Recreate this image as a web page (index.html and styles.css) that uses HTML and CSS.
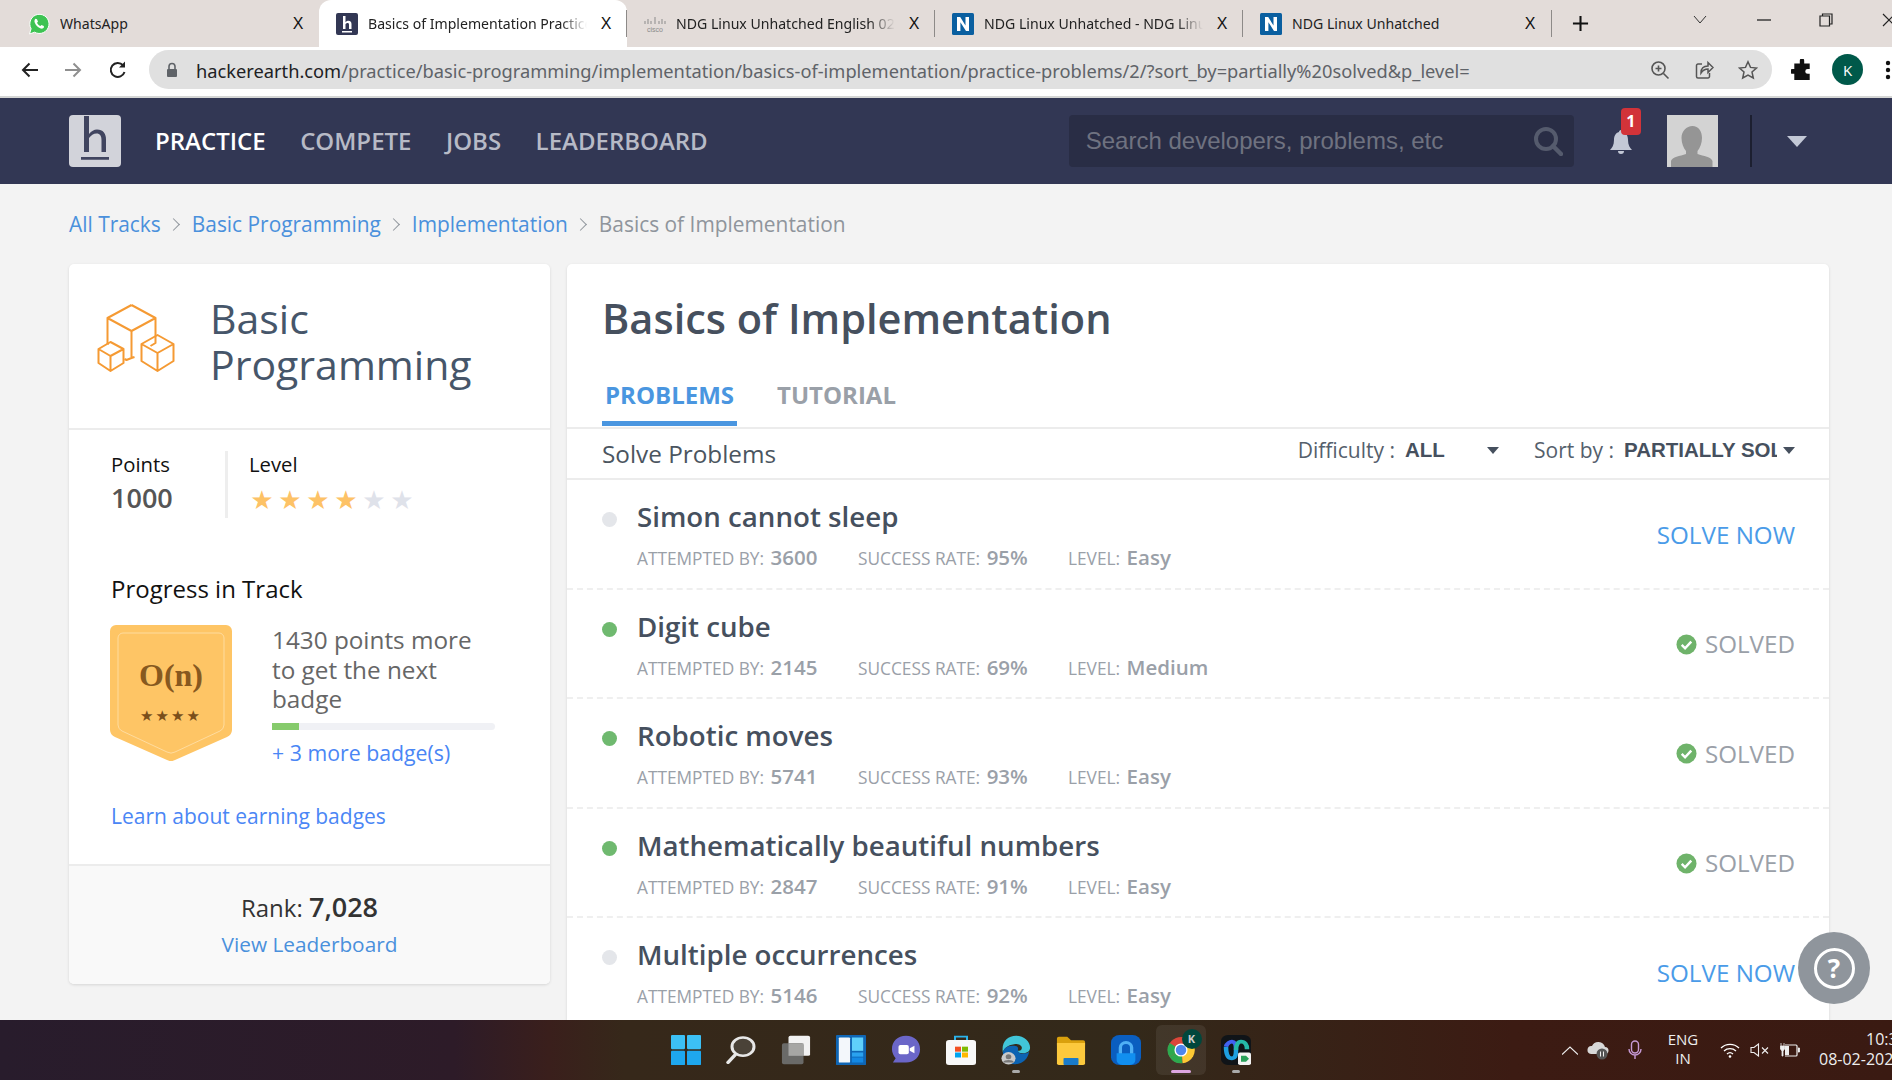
FILE: index.html
```html
<!DOCTYPE html>
<html lang="en">
<head>
<meta charset="utf-8">
<title>Basics of Implementation Practice</title>
<link rel="stylesheet" href="styles.css">
</head>
<body>
<div class="tabstrip">
  <div class="tab">
    <svg class="fav" viewBox="0 0 22 22"><path d="M1.500 21l1.600-5.300A9.600 9.600 0 1 1 6.600 19.200z" fill="#3ec353" stroke="#fff" stroke-width="1"/><path d="M7.600 5.800c-.9.600-1.500 2-.9 3.700 1 2.800 3.300 5 6 6 1.400.5 2.800-.2 3.300-1.200l-.2-1.300-2.300-1.100-1.100 1.200c-1.500-.6-2.800-1.900-3.400-3.300l1-1.100-1-2.400z" fill="#fff"/></svg>
    <span class="tabname">WhatsApp</span><span class="tabx">X</span>
  </div>
  <div class="tab tab-active">
    <svg class="fav" viewBox="0 0 22 22"><rect width="22" height="22" rx="2" fill="#323754"/><path d="M7 3h2.500v6.200c1-1 2-1.400 3-1.400 2 0 3 1.300 3 3.500V16H13v-4.200c0-1.300-.4-1.900-1.500-1.900-.9 0-1.600.6-2 1.300V16H7z M6 18h10v1.500H6z" fill="#fff"/></svg>
    <span class="tabname tabname-fade">Basics of Implementation Practice</span><span class="tabx">X</span>
  </div>
  <div class="tab">
    <svg class="fav" viewBox="0 0 22 22"><g stroke="#8b8b8b" stroke-width="1"><path d="M1 8v3M4 6v5M7 8v3M11 4v7M15 8v3M18 6v5M21 8v3"/></g><text x="11" y="19" class="ciscotext">cisco</text></svg>
    <span class="tabname tabname-fade">NDG Linux Unhatched English 02</span><span class="tabx">X</span><i class="tabsep"></i>
  </div>
  <div class="tab">
    <svg class="fav" viewBox="0 0 22 22"><rect width="22" height="22" rx="1.500" fill="#0a5fa0"/><path d="M5 4h3.200l5.300 8.500V4H17v14h-3L8.400 9.200V18H5z" fill="#fff"/></svg>
    <span class="tabname tabname-fade">NDG Linux Unhatched - NDG Linux</span><span class="tabx">X</span><i class="tabsep"></i>
  </div>
  <div class="tab">
    <svg class="fav" viewBox="0 0 22 22"><rect width="22" height="22" rx="1.500" fill="#0a5fa0"/><path d="M5 4h3.200l5.300 8.500V4H17v14h-3L8.400 9.200V18H5z" fill="#fff"/></svg>
    <span class="tabname">NDG Linux Unhatched</span><span class="tabx">X</span><i class="tabsep"></i>
  </div>
  <i class="tabsep tabsep-end"></i>
  <svg class="newtab" viewBox="0 0 18 18"><path d="M9 1v16M1 9h16" stroke="#111" stroke-width="2.200"/></svg>
  <div class="winctl">
    <svg class="wc wc-down" viewBox="0 0 14 10"><path d="M1 1l6 7 6-7" fill="none" stroke="#333" stroke-width="1"/></svg>
    <svg class="wc wc-min" viewBox="0 0 14 10"><path d="M0 5h14" stroke="#222" stroke-width="1.300"/></svg>
    <svg class="wc wc-max" viewBox="0 0 14 14"><path d="M3.500 3V1h9.500v10h-2.500M1 3h9.500v10H1z" fill="none" stroke="#222" stroke-width="1.200"/></svg>
    <svg class="wc wc-close" viewBox="0 0 14 14"><path d="M1 1l12 12M13 1L1 13" stroke="#222" stroke-width="1.200"/></svg>
  </div>
</div>

<div class="toolbar">
  <svg class="tb-ic" viewBox="0 0 20 20"><path d="M18 10H3M9.500 3.500L3 10l6.500 6.500" fill="none" stroke="#222" stroke-width="2"/></svg>
  <svg class="tb-ic" viewBox="0 0 20 20"><path d="M2 10h15M10.500 3.500L17 10l-6.500 6.500" fill="none" stroke="#8f8f8f" stroke-width="2"/></svg>
  <svg class="tb-ic" viewBox="0 0 20 20"><path d="M16.500 12A7 7 0 1 1 15 5.200" fill="none" stroke="#222" stroke-width="2"/><path d="M17 1.500v6h-6z" fill="#222"/></svg>
  <div class="omnibox">
    <svg class="lock" viewBox="0 0 12 16"><path d="M3 7V4.500a3 3 0 0 1 6 0V7" fill="none" stroke="#5f6368" stroke-width="1.600"/><rect x="1" y="7" width="10" height="8" rx="1" fill="#5f6368"/></svg>
    <span class="url"><b class="url-host">hackerearth.com</b>/practice/basic-programming/implementation/basics-of-implementation/practice-problems/2/?sort_by=partially%20solved&amp;p_level=</span>
    <svg class="omni-ic" viewBox="0 0 20 20"><circle cx="8.500" cy="8.500" r="6.500" fill="none" stroke="#555" stroke-width="1.600"/><path d="M13.500 13.500l5 5M8.500 5.500v6M5.500 8.500h6" stroke="#555" stroke-width="1.600"/></svg>
    <svg class="omni-ic" viewBox="0 0 20 20"><path d="M8 4H4a1.500 1.500 0 0 0-1.500 1.500v11A1.500 1.500 0 0 0 4 18h10a1.500 1.500 0 0 0 1.500-1.500V13M7 13c0-5 3-7 7-7V2.500l5 5-5 5V9c-3 0-5 1-7 4z" fill="none" stroke="#555" stroke-width="1.500"/></svg>
    <svg class="omni-ic" viewBox="0 0 20 20"><path d="M10 1.800l2.500 5.600 6 .6-4.500 4 1.300 6L10 15l-5.300 3 1.300-6-4.500-4 6-.6z" fill="none" stroke="#555" stroke-width="1.500"/></svg>
  </div>
  <svg class="tb-puzzle" viewBox="0 0 20 20"><path d="M8 1.500a2 2 0 0 1 4 0V4h5v5h-1.800a2.200 2.200 0 0 0 0 4.500H17V19H3v-5.500H1.500a2.200 2.200 0 0 1 0-4.500H3V4h5z" fill="#111"/></svg>
  <span class="profile">K</span>
  <svg class="tb-dots" viewBox="0 0 6 20"><circle cx="3" cy="3" r="2.200" fill="#111"/><circle cx="3" cy="10" r="2.200" fill="#111"/><circle cx="3" cy="17" r="2.200" fill="#111"/></svg>
</div>

<header class="nav">
  <svg class="logo" viewBox="0 0 52 52"><rect width="52" height="52" rx="4" fill="#d2d3da"/><path d="M15 1h5v18c2.500-3 5-4.500 8-4.500 6 0 9 4 9 10V37h-4.500V25c0-4-1.500-6.500-5-6.500-3 0-5.500 2-7.500 4.500v14h-5z M12 42h28v2.800H12z" fill="#40445f"/></svg>
  <nav class="menu">
    <a class="menu-item menu-on">PRACTICE</a>
    <a class="menu-item">COMPETE</a>
    <a class="menu-item">JOBS</a>
    <a class="menu-item">LEADERBOARD</a>
  </nav>
  <div class="search">
    <span class="search-text">Search developers, problems, etc</span>
    <svg class="search-ic" viewBox="0 0 30 30"><circle cx="13" cy="13" r="10" fill="none" stroke="#555b6d" stroke-width="4"/><path d="M20 20l8 8" stroke="#555b6d" stroke-width="4.500" stroke-linecap="round"/></svg>
  </div>
  <div class="bell">
    <svg class="bell-ic" viewBox="0 0 24 24"><path d="M12 0c1.300 0 2 1 2 2 3.500 1 5 4 5 8 0 5 2 8 4 10H1c2-2 4-5 4-10 0-4 1.500-7 5-8 0-1 .7-2 2-2zM9 21h6a3 3 0 0 1-6 0z" fill="#c3c8d6"/></svg>
    <span class="bell-badge">1</span>
  </div>
  <svg class="avatar" viewBox="0 0 51 52"><rect width="51" height="52" fill="#d3d3d3"/><path d="M25.500 11c6 0 9.500 5 9.500 12 0 5-2 10-4.500 13v3c6 2 14 3 15 7v6H4v-6c1-4 9-5 15-7v-3c-2.500-3-4.500-8-4.500-13 0-7 5-12 11-12z" fill="#959595"/></svg>
  <i class="nav-div"></i>
  <i class="nav-caret"></i>
</header>

<main class="page">
  <div class="crumbs">
    <a class="crumb">All Tracks</a><span class="crumb-sep"></span>
    <a class="crumb">Basic Programming</a><span class="crumb-sep"></span>
    <a class="crumb">Implementation</a><span class="crumb-sep"></span>
    <span class="crumb crumb-cur">Basics of Implementation</span>
  </div>
  <div class="columns">
    <aside class="side">
      <div class="side-head">
        <svg class="cubes" viewBox="0 0 80 68"><g fill="none" stroke="#f59a33" stroke-width="2" stroke-linejoin="round"><path d="M36 1l24 13v25l-5 3M36 1L12 14v26M12 14l24 13 24-13M36 27v27l-5 2-2-1M36 54l3-1M12 40l1-.5"/><path d="M15 38l13 7v14l-13 8-12-8V45zM3 45l12 7 13-7M15 52v15"/><path d="M62 31l16 9v17l-16 10-16-10V40zM46 40l16 9 16-9M62 49v18"/></g></svg>
        <h2 class="side-title">Basic Programming</h2>
      </div>
      <div class="stats">
        <div class="stat-pts">
          <div class="stat-label">Points</div>
          <div class="stat-val">1000</div>
        </div>
        <div class="stat-lvl">
          <div class="stat-label">Level</div>
          <div class="stars"><span class="star on">★</span><span class="star on">★</span><span class="star on">★</span><span class="star on">★</span><span class="star">★</span><span class="star">★</span></div>
        </div>
      </div>
      <div class="progress">
        <div class="prog-title">Progress in Track</div>
        <div class="prog-body">
          <div class="badge">
            <svg class="badge-bg" viewBox="0 0 122 136"><path d="M6 0h110a6 6 0 0 1 6 6v99a8 8 0 0 1-5 7l-52 23a8 8 0 0 1-8 0L5 112a8 8 0 0 1-5-7V6a6 6 0 0 1 6-6z" fill="#fec565"/><path d="M13 8h96a5 5 0 0 1 5 5v87a7 7 0 0 1-4 6l-45 21a8 8 0 0 1-8 0L12 106a7 7 0 0 1-4-6V13a5 5 0 0 1 5-5z" fill="none" stroke="#fedc9f" stroke-width="1"/></svg>
            <span class="badge-on">O(n)</span>
            <span class="badge-stars">★★★★</span>
          </div>
          <div class="prog-info">
            <p class="prog-text">1430 points more to get the next badge</p>
            <div class="bar"><div class="bar-fill" style="width:12%"></div></div>
            <a class="link prog-more">+ 3 more badge(s)</a>
          </div>
        </div>
        <a class="link learn">Learn about earning badges</a>
      </div>
      <div class="rank">
        <div class="rank-line">Rank: <b class="rank-num">7,028</b></div>
        <a class="link rank-link">View Leaderboard</a>
      </div>
    </aside>

    <section class="content">
      <h1 class="title">Basics of Implementation</h1>
      <div class="ctabs">
        <a class="ctab ctab-on">PROBLEMS</a>
        <a class="ctab">TUTORIAL</a>
      </div>
      <div class="filters">
        <span class="solve-label">Solve Problems</span>
        <div class="filter filter-diff"><span>Difficulty :</span><b class="filter-val val-all">ALL</b><i class="caret"></i></div>
        <div class="filter"><span>Sort by :</span><b class="filter-val val-sort">PARTIALLY SOLVED</b><i class="caret"></i></div>
      </div>

      <article class="row">
        <i class="dot"></i>
        <div class="row-main">
          <a class="row-title">Simon cannot sleep</a>
          <div class="meta">
            <span class="m m1">ATTEMPTED BY: <b>3600</b></span>
            <span class="m m2">SUCCESS RATE: <b>95%</b></span>
            <span class="m">LEVEL: <b>Easy</b></span>
          </div>
        </div>
        <a class="solve">SOLVE NOW</a>
      </article>

      <article class="row">
        <i class="dot dot-ok"></i>
        <div class="row-main">
          <a class="row-title">Digit cube</a>
          <div class="meta">
            <span class="m m1">ATTEMPTED BY: <b>2145</b></span>
            <span class="m m2">SUCCESS RATE: <b>69%</b></span>
            <span class="m">LEVEL: <b>Medium</b></span>
          </div>
        </div>
        <span class="solved"><svg class="check" viewBox="0 0 22 22"><circle cx="11" cy="11" r="10.500" fill="#6fb36a"/><path d="M6 11.500l3.500 3.500L16 8" fill="none" stroke="#fff" stroke-width="2.600"/></svg>SOLVED</span>
      </article>

      <article class="row">
        <i class="dot dot-ok"></i>
        <div class="row-main">
          <a class="row-title">Robotic moves</a>
          <div class="meta">
            <span class="m m1">ATTEMPTED BY: <b>5741</b></span>
            <span class="m m2">SUCCESS RATE: <b>93%</b></span>
            <span class="m">LEVEL: <b>Easy</b></span>
          </div>
        </div>
        <span class="solved"><svg class="check" viewBox="0 0 22 22"><circle cx="11" cy="11" r="10.500" fill="#6fb36a"/><path d="M6 11.500l3.500 3.500L16 8" fill="none" stroke="#fff" stroke-width="2.600"/></svg>SOLVED</span>
      </article>

      <article class="row">
        <i class="dot dot-ok"></i>
        <div class="row-main">
          <a class="row-title">Mathematically beautiful numbers</a>
          <div class="meta">
            <span class="m m1">ATTEMPTED BY: <b>2847</b></span>
            <span class="m m2">SUCCESS RATE: <b>91%</b></span>
            <span class="m">LEVEL: <b>Easy</b></span>
          </div>
        </div>
        <span class="solved"><svg class="check" viewBox="0 0 22 22"><circle cx="11" cy="11" r="10.500" fill="#6fb36a"/><path d="M6 11.500l3.500 3.500L16 8" fill="none" stroke="#fff" stroke-width="2.600"/></svg>SOLVED</span>
      </article>

      <article class="row">
        <i class="dot"></i>
        <div class="row-main">
          <a class="row-title">Multiple occurrences</a>
          <div class="meta">
            <span class="m m1">ATTEMPTED BY: <b>5146</b></span>
            <span class="m m2">SUCCESS RATE: <b>92%</b></span>
            <span class="m">LEVEL: <b>Easy</b></span>
          </div>
        </div>
        <a class="solve">SOLVE NOW</a>
      </article>
    </section>
  </div>
  <div class="help"><span class="help-ring">?</span></div>
</main>

<footer class="taskbar">
  <div class="task-icons">
    <span class="ti"><svg preserveAspectRatio="none" viewBox="0 0 30 36"><g fill="#3cc0f5"><rect width="14" height="17" rx="1"/><rect x="16" width="14" height="17" rx="1"/><rect y="19" width="14" height="17" rx="1" fill="#1ea7ee"/><rect x="16" y="19" width="14" height="17" rx="1" fill="#1ea7ee"/></g></svg></span>
    <span class="ti"><svg preserveAspectRatio="none" viewBox="0 0 30 36"><circle cx="17" cy="14" r="11" fill="#4a4238" stroke="#e8e8e8" stroke-width="3"/><path d="M9 24l-7 9" stroke="#e8e8e8" stroke-width="3.500" stroke-linecap="round"/></svg></span>
    <span class="ti"><svg preserveAspectRatio="none" viewBox="0 0 32 36"><rect x="8" y="1" width="23" height="24" rx="2" fill="#f2f2f2"/><rect x="1" y="10" width="23" height="25" rx="2" fill="#6a6a68"/><rect x="8" y="10" width="16" height="15" fill="#a6a6a4"/></svg></span>
    <span class="ti"><svg preserveAspectRatio="none" viewBox="0 0 32 36"><rect width="32" height="36" rx="1" fill="#0f66b5"/><rect x="3" y="3" width="12" height="30" rx="1" fill="#f3f7fb"/><rect x="17" y="3" width="12" height="16" fill="#5fd0fb"/><rect x="17" y="21" width="12" height="5" fill="#2aa2ef"/><rect x="17" y="27" width="12" height="6" fill="#1388e4"/></svg></span>
    <span class="ti"><svg preserveAspectRatio="none" viewBox="0 0 32 36"><path d="M16 1c9 0 15 7 15 16s-6 16-15 16H2l3-5C3 25 1 21 1 17 1 8 7 1 16 1z" fill="#6b66c8"/><rect x="8" y="12" width="11" height="11" rx="2" fill="#fff"/><path d="M20 16l5-3v9l-5-3z" fill="#fff"/></svg></span>
    <span class="ti"><svg preserveAspectRatio="none" viewBox="0 0 30 36"><path d="M9 7V2h12v5" fill="none" stroke="#2bb4ec" stroke-width="2"/><rect y="6" width="30" height="30" rx="3" fill="#f8f8f8"/><rect x="9" y="14" width="6" height="6" fill="#f25022"/><rect x="16" y="14" width="6" height="6" fill="#7fba00"/><rect x="9" y="21" width="6" height="6" fill="#00a4ef"/><rect x="16" y="21" width="6" height="6" fill="#ffb900"/></svg></span>
    <span class="ti"><svg preserveAspectRatio="none" viewBox="0 0 32 36"><path d="M16 1c9 0 15 7 15 14 0 5-4 7-8 7-3 0-5-1-5-3 3 0 5-2 4-5-1-2-4-4-8-3C7 12 3 16 2 21 0 9 7 1 16 1z" fill="#41c5d8"/><path d="M2 21c1-5 5-9 12-8 3 0 5 2 4 5 0 4 4 5 7 4 2 0 4-1 5-2-1 8-7 15-15 15C8 35 2 29 2 21z" fill="#0c63b2"/><circle cx="8" cy="28" r="7.500" fill="#c9c9c9"/><circle cx="8" cy="26" r="3" fill="#777"/><path d="M2 33c1-4 11-4 12 0" fill="#777"/></svg><i class="ti-mark"></i></span>
    <span class="ti"><svg preserveAspectRatio="none" viewBox="0 0 32 34"><path d="M1 4a2 2 0 0 1 2-2h9l4 4h13a2 2 0 0 1 2 2v4H1z" fill="#d9a00d"/><path d="M1 9h30v23a2 2 0 0 1-2 2H3a2 2 0 0 1-2-2z" fill="#fcc93d"/><rect x="8" y="26" width="16" height="8" rx="1" fill="#1a7bc9"/></svg></span>
    <span class="ti"><svg preserveAspectRatio="none" viewBox="0 0 32 36"><rect width="32" height="36" rx="9" fill="#0a5ec0"/><path d="M10 24V15a6 6 0 0 1 12 0v9" fill="none" stroke="#4fb0f5" stroke-width="3.500"/><path d="M6 22h20v8a6 6 0 0 1-6 6h-8a6 6 0 0 1-6-6z" fill="#118ff0"/></svg></span>
    <span class="ti ti-active"><svg class="ti-chrome" preserveAspectRatio="none" viewBox="0 0 32 32"><circle cx="16" cy="16" r="15" fill="#dc463a"/><path d="M16 16L3 24a15 15 0 0 0 15 7z" fill="#2da94f"/><path d="M3 24A15 15 0 0 1 3 8l13 8z" fill="#2da94f"/><path d="M16 9h14a15 15 0 0 1-12 22z" fill="#fcc934"/><circle cx="16" cy="16" r="7.500" fill="#fff"/><circle cx="16" cy="16" r="6" fill="#4f86ec"/></svg><em class="ti-k">K</em><i class="ti-mark ti-mark-chrome"></i></span>
    <span class="ti"><svg preserveAspectRatio="none" viewBox="0 0 30 36"><rect width="30" height="36" rx="7" fill="#101418"/><path d="M5 14c0 10 2 14 6 14 4 0 4-6 4-10" fill="none" stroke="#1e9fe0" stroke-width="4.500"/><path d="M5 14c1-4 4-6 6-6 3 0 4 4 4 10" fill="none" stroke="#4162f2" stroke-width="4.500"/><path d="M15 18c0-6 2-10 5-10 4 0 6 4 6 9" fill="none" stroke="#25b8a8" stroke-width="4.500"/><rect x="17" y="21" width="13" height="15" rx="2" fill="#f3f3f3"/><path d="M20 25h5l3 3.500-3 3.500h-5z" fill="#2aa05a"/></svg><i class="ti-mark"></i></span>
  </div>
  <div class="tray">
    <svg class="tr tr-chev" viewBox="0 0 16 9"><path d="M0 8.500L8 1l8 7.500" fill="none" stroke="#eee" stroke-width="1.100"/></svg>
    <svg class="tr tr-cloud" viewBox="0 0 22 20"><path d="M4 14a4 4 0 0 1 1-8 7 7 0 0 1 13 1 3.500 3.500 0 0 1 0 7z" fill="#d8d8d8"/><circle cx="15" cy="14" r="5.500" fill="#555"/><path d="M13.500 11.500v5M16.500 11.500v5" stroke="#eee" stroke-width="1"/></svg>
    <svg class="tr tr-mic" viewBox="0 0 14 20"><rect x="3.500" y="1" width="7" height="12" rx="3.500" fill="none" stroke="#c79ad6" stroke-width="1.400"/><path d="M1 9a6 6 0 0 0 12 0M7 15v4" fill="none" stroke="#c79ad6" stroke-width="1.400"/></svg>
    <div class="lang"><span>ENG</span><span>IN</span></div>
    <svg class="tr tr-wifi" viewBox="0 0 20 16"><path d="M1 6a13 13 0 0 1 18 0M4 9a9 9 0 0 1 12 0M7 12a4.500 4.500 0 0 1 6 0" fill="none" stroke="#fff" stroke-width="1.300"/><circle cx="10" cy="14.500" r="1.300" fill="#fff"/></svg>
    <svg class="tr tr-vol" viewBox="0 0 20 14"><path d="M1 4.500h3L8.500 1v12L4 9.500H1z" fill="none" stroke="#eee" stroke-width="1.100"/><path d="M12 4.500l6 6M18 4.500l-6 6" stroke="#eee" stroke-width="1.100"/></svg>
    <svg class="tr tr-bat" viewBox="0 0 20 16"><path d="M5 3h11a1 1 0 0 1 1 1v9a1 1 0 0 1-1 1H5" fill="none" stroke="#eee" stroke-width="1.200"/><rect x="5" y="4" width="4" height="9" fill="#eee"/><path d="M18 6h1.500v4H18M1 1v3M4 1v3M.5 4h4v3L3 9v5h-1V9L.5 7z" stroke="#eee" fill="#eee" stroke-width=".8"/></svg>
    <div class="clock"><span class="clock-time">10:31</span><span>08-02-2022</span></div>
  </div>
</footer>
</body>
</html>
```
FILE: styles.css
```css
* { box-sizing: border-box; }
html, body { margin: 0; height: 100%; }
body {
  width: 1892px; height: 1080px; overflow: hidden;
  display: flex; flex-direction: column;
  background: #f3f3f3;
  font-family: "Open Sans", "Noto Sans", sans-serif;
}
a { text-decoration: none; }
h1, h2, p { margin: 0; }
i, em { font-style: normal; }

/* browser tabs */
.tabstrip { height: 47px; background: #e3dcd9; display: flex; align-items: center; padding-left: 11px; flex: none; position: relative; }
.tab { width: 308px; height: 47px; display: flex; align-items: center; padding: 0 14px 0 17px; position: relative; flex: none; }
.tab-active { background: #fff; border-radius: 12px 12px 0 0; }
.fav { width: 22px; height: 22px; flex: none; margin-right: 10px; }
.tabname { flex: 1; font-size: 14.100px; color: #222; white-space: nowrap; overflow: hidden; font-family: "Noto Sans", sans-serif; }
.tabname-fade { -webkit-mask-image: linear-gradient(90deg, #000 88%, transparent 100%); mask-image: linear-gradient(90deg, #000 88%, transparent 100%); }
.tabx { width: 14px; flex: none; margin-left: 12px; font-size: 16px; color: #111; text-align: center; font-family: "Liberation Sans", sans-serif; }
.tabsep { position: absolute; left: -1px; top: 10px; width: 1px; height: 27px; background: #8d8a88; }
.tabsep-end { left: 1551px; }
.ciscotext { font-size: 7px; fill: #8b8b8b; text-anchor: middle; font-family: "Liberation Sans", sans-serif; }
.newtab { width: 17px; height: 17px; margin-left: 21px; flex: none; }
.winctl { margin-left: auto; display: flex; align-items: center; height: 47px; padding-bottom: 7px; margin-right: 7px; }
.wc { display: block; flex: none; }
.wc-down { width: 14px; height: 10px; margin-right: 50px; }
.wc-min { width: 14px; height: 10px; margin-right: 48px; }
.wc-max { width: 14px; height: 14px; margin-right: 49px; }
.wc-close { width: 14px; height: 14px; margin-right: -11px; }

/* address bar */
.toolbar { height: 51px; background: #fff; border-bottom: 2px solid #d5d6d5; display: flex; align-items: center; padding: 0 0 4px 20px; flex: none; overflow: hidden; }
.tb-ic { width: 20px; height: 20px; flex: none; margin-right: 23px; }
.tb-ic:nth-child(2) { margin-right: 25px; }
.tb-ic:nth-child(3) { margin-right: 21px; }
.omnibox { width: 1623px; height: 39px; background: #e0e0e0; border-radius: 20px; display: flex; align-items: center; padding-left: 17px; flex: none; }
.lock { width: 12px; height: 16px; flex: none; margin-right: 18px; }
.url { flex: 1; font-size: 18.250px; color: #5f6368; white-space: nowrap; overflow: hidden; font-family: "Noto Sans", sans-serif; padding-top: 2px; }
.url-host { font-weight: 400; color: #202124; }
.omni-ic { width: 20px; height: 20px; flex: none; margin-right: 24px; }
.omni-ic:last-child { margin-right: 14px; }
.tb-puzzle { width: 22px; height: 22px; flex: none; margin-left: 19px; }
.profile { width: 31px; height: 31px; border-radius: 50%; background: #00594a; color: #fff; font-size: 15px; display: flex; align-items: center; justify-content: center; margin-left: 19px; flex: none; }
.tb-dots { width: 6px; height: 20px; flex: none; margin-left: 22px; }

/* site nav */
.nav { height: 86px; background: #323754; display: flex; align-items: center; padding-left: 69px; flex: none; }
.logo { width: 52px; height: 52px; flex: none; }
.menu { display: flex; gap: 34.500px; margin-left: 34px; margin-bottom: 1px; }
.menu-item { font-size: 24px; font-weight: 600; color: #b7bac6; }
.menu-on { color: #fff; }
.search { width: 505px; height: 52px; background: #292d45; border-radius: 4px; margin-left: 361px; display: flex; align-items: center; padding: 0 11px 0 17px; }
.search-text { flex: 1; font-family: "Liberation Sans", sans-serif; font-size: 24px; color: #6f7280; white-space: nowrap; }
.search-ic { width: 30px; height: 30px; }
.bell { width: 24px; height: 24px; margin-left: 35px; position: relative; margin-top: 2px; }
.bell-ic { width: 24px; height: 24px; display: block; }
.bell-badge { position: absolute; left: 12px; top: -22px; width: 20px; height: 27px; background: #d23339; border-radius: 4px; color: #fff; font-size: 16px; font-weight: 700; text-align: center; line-height: 27px; }
.avatar { width: 51px; height: 52px; margin-left: 34px; flex: none; }
.nav-div { width: 2px; height: 52px; background: #1c1f30; margin-left: 32px; }
.nav-caret { margin-left: 35px; border-style: solid; border-width: 11px 10px 0; border-color: #c3c8d6 transparent transparent; width: 0; height: 0; }

/* page */
.page { flex: 1; min-height: 0; padding: 0 0 0 69px; position: relative; overflow: hidden; }
.crumbs { height: 80px; display: flex; align-items: center; font-size: 20.900px; }
.crumb { color: #4a90dc; }
.crumb-cur { color: #8f959c; }
.crumb-sep { width: 9px; height: 9px; border-top: 1.500px solid #8f959c; border-right: 1.500px solid #8f959c; transform: rotate(45deg); margin: 0 14px 0 8px; }
.columns { display: flex; gap: 17px; align-items: flex-start; }

/* left card */
.side { width: 481px; height: 720px; background: #fff; border-radius: 5px; box-shadow: 0 1px 3px rgba(0,0,0,.12); display: flex; flex-direction: column; flex: none; }
.side-head { height: 166px; border-bottom: 2px solid #ececec; display: flex; align-items: flex-start; padding: 40px 0 0 26px; }
.cubes { width: 81px; height: 68px; flex: none; margin-right: 34px; }
.side-title { font-size: 41px; font-weight: 400; line-height: 46px; color: #46566a; width: 270px; margin-top: -9px; }
.stats { display: flex; padding: 20px 0 0 42px; height: 88px; }
.stat-pts { width: 117px; border-right: 3px solid #eeeeee; margin-top: 1px; }
.stat-lvl { padding-left: 21px; }
.stat-label { font-size: 20.300px; line-height: 28px; color: #111; }
.stat-pts .stat-label { margin-top: -1px; }
.stat-val { font-size: 27px; font-weight: 600; line-height: 39px; color: #555; }
.stars { display: flex; gap: 2px; margin-top: 6px; }
.star { width: 26px; font-size: 26px; line-height: 32px; color: #dfe2ea; text-align: center; font-family: "DejaVu Sans", sans-serif; }
.star.on { color: #fdc266; }
.progress { padding: 55px 0 0 42px; flex: 1; display: flex; flex-direction: column; align-items: flex-start; }
.prog-title { font-size: 24px; line-height: 32px; color: #111; }
.prog-body { display: flex; margin-top: 20px; }
.badge { width: 122px; height: 136px; position: relative; flex: none; display: flex; flex-direction: column; align-items: center; margin-left: -1px; }
.badge-bg { position: absolute; inset: 0; width: 122px; height: 136px; }
.badge-on { position: relative; font-family: "Liberation Serif", serif; font-weight: 700; font-size: 32px; color: #87591f; margin-top: 30px; line-height: 40px; }
.badge-stars { position: relative; font-size: 15px; letter-spacing: 2px; color: #7a4f1b; margin-top: 12px; font-family: "DejaVu Sans", sans-serif; line-height: 18px; }
.prog-info { width: 223px; margin-left: 40px; }
.prog-text { font-size: 24.300px; line-height: 29.500px; color: #666; width: 226px; }
.bar { height: 7px; background: #f0f1f5; border-radius: 0 4px 4px 0; margin-top: 9px; overflow: hidden; }
.bar-fill { height: 7px; background: #86cb6c; }
.link { color: #4a86f5; font-size: 21px; line-height: 30px; }
.prog-more { display: block; margin-top: 8px; font-size: 21.300px; }
.learn { margin-top: 33px; }
.rank { height: 120px; background: #f9f9f9; border-top: 2px solid #ececec; border-radius: 0 0 5px 5px; display: flex; flex-direction: column; align-items: center; padding-top: 22px; }
.rank-line { font-size: 24px; line-height: 38px; color: #333; }
.rank-num { font-size: 27px; font-weight: 600; }
.rank-link { color: #4a90dc; line-height: 34px; font-size: 20.800px; }

/* right card */
.content { width: 1262px; height: 800px; background: #fff; border-radius: 5px 5px 0 0; box-shadow: 0 1px 3px rgba(0,0,0,.12); flex: none; }
.title { font-size: 41.500px; font-weight: 600; color: #46505e; line-height: 58px; padding: 25px 0 0 35px; }
.ctabs { display: flex; height: 82px; padding: 21px 0 0 35px; gap: 37px; border-bottom: 2px solid #ececec; }
.ctab { font-size: 24px; font-weight: 700; color: #9aa0a8; padding: 0 3px; height: 58px; line-height: 54px; }
.ctab-on { color: #4a96e0; border-bottom: 5px solid #4a96e0; }
.filters { height: 51px; border-bottom: 2px solid #ececec; display: flex; align-items: center; padding: 0 34px 0 35px; }
.solve-label { font-size: 24.300px; color: #4b5560; flex: 1; }
.filter { display: flex; align-items: center; font-size: 21px; color: #55606c; margin-bottom: 7px; }
.filter-val { font-family: "Liberation Sans", sans-serif; font-size: 20.500px; font-weight: 700; color: #46505e; margin-left: 10px; overflow: hidden; white-space: nowrap; }
.val-all { width: 76px; }
.val-sort { width: 153px; }
.caret { width: 0; height: 0; border-style: solid; border-width: 7px 6px 0; border-color: #46505e transparent transparent; margin-left: 6px; }
.filter-diff { margin-right: 35px; }
.row { height: 109.500px; border-bottom: 2px dashed #efefef; display: flex; align-items: flex-start; padding: 0 34px 0 35px; }
.dot { width: 15px; height: 15px; border-radius: 50%; background: #e4e6ea; margin-top: 32px; flex: none; }
.dot-ok { background: #6fb96f; }
.row-main { flex: 1; margin-left: 20px; padding-top: 17px; }
.row-title { font-size: 27.700px; font-weight: 600; color: #46505e; line-height: 38px; display: block; }
.meta { display: flex; margin-top: 8px; color: #9aa0a8; font-size: 17.300px; align-items: baseline; line-height: 28px; }
.m b { font-size: 20.500px; font-weight: 600; margin-left: 2px; }
.m1 { width: 221px; }
.m2 { width: 210px; }
.solve { font-size: 24.200px; color: #4a9be8; margin-top: 37.500px; line-height: 34px; }
.solved { font-size: 24.200px; color: #9aa0a8; margin-top: 37.500px; line-height: 34px; display: flex; align-items: center; }
.check { width: 21px; height: 21px; margin-right: 8px; }

.help { position: absolute; left: 1798px; top: 748px; width: 72px; height: 72px; border-radius: 50%; background: #8f959c; display: flex; align-items: center; justify-content: center; }
.help-ring { width: 41px; height: 41px; border: 3px solid #fff; border-radius: 50%; color: #fff; font-size: 26px; font-weight: 700; line-height: 35px; text-align: center; }

/* taskbar */
.taskbar { height: 60px; background: linear-gradient(90deg, #281c2c 0%, #2d1b28 24%, #3a1f1c 29%, #36281a 33%, #33291a 60%, #3c1b13 80%, #3a1a12 100%); display: flex; align-items: center; flex: none; padding-left: 658px; position: relative; }
.task-icons { display: flex; }
.ti { width: 55px; height: 50px; display: flex; align-items: center; justify-content: center; position: relative; flex: none; border-radius: 4px; }
.ti svg { width: 30px; height: 30px; }
.ti .ti-chrome { width: 28px; height: 28px; }
.ti-active { width: 50px; margin: 0 2.500px; background: rgba(255,255,255,.07); border-radius: 6px; }
.ti-k { position: absolute; right: 4px; top: 4px; width: 20px; height: 20px; border-radius: 50%; background: #00473c; color: #ccc; font-size: 11px; font-weight: 700; text-align: center; line-height: 20px; }
.ti-mark { position: absolute; left: 50%; bottom: 2px; width: 8px; height: 3px; margin-left: -4px; background: #aaa; border-radius: 2px; }
.ti-mark-chrome { width: 20px; margin-left: -10px; background: #dda6e2; }
.tray { position: absolute; left: 1562px; top: 0; height: 60px; width: 330px; display: flex; align-items: center; color: #eee; font-size: 15px; overflow: hidden; }
.tr { flex: none; }
.tr-chev { width: 16px; height: 9px; margin-right: 9px; }
.tr-cloud { width: 22px; height: 20px; margin-right: 19px; }
.tr-mic { width: 14px; height: 20px; margin-right: 21px; }
.lang { display: flex; flex-direction: column; align-items: center; line-height: 19px; width: 40px; flex: none; margin-right: 17px; margin-bottom: 2px; }
.tr-wifi { width: 20px; height: 16px; margin-right: 10px; }
.tr-vol { width: 20px; height: 14px; margin-right: 10px; }
.tr-bat { width: 20px; height: 16px; margin-right: 19px; }
.clock { display: flex; flex-direction: column; align-items: flex-start; line-height: 20px; white-space: nowrap; flex: none; margin-bottom: 2px; font-size: 16px; }
.clock-time { margin-left: 47px; }
```
